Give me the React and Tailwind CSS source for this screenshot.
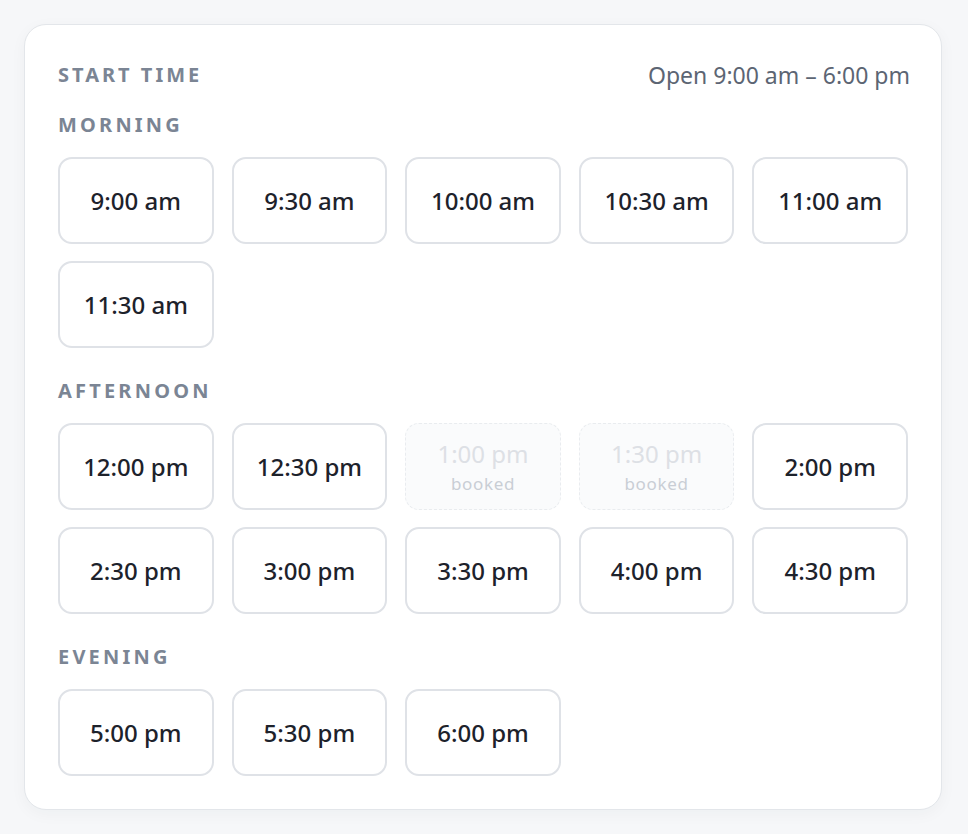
import React from "react";

const sections = [
  {
    name: "Morning",
    slots: [
      { t: "9:00 am" },
      { t: "9:30 am" },
      { t: "10:00 am" },
      { t: "10:30 am" },
      { t: "11:00 am" },
      { t: "11:30 am" },
    ],
  },
  {
    name: "Afternoon",
    slots: [
      { t: "12:00 pm" },
      { t: "12:30 pm" },
      { t: "1:00 pm", booked: true },
      { t: "1:30 pm", booked: true },
      { t: "2:00 pm" },
      { t: "2:30 pm" },
      { t: "3:00 pm" },
      { t: "3:30 pm" },
      { t: "4:00 pm" },
      { t: "4:30 pm" },
    ],
  },
  {
    name: "Evening",
    slots: [{ t: "5:00 pm" }, { t: "5:30 pm" }, { t: "6:00 pm" }],
  },
];

function Slot({ slot }) {
  if (slot.booked) {
    return (
      <div className="h-[87px] rounded-[14px] border border-dashed border-[#e9ecef] bg-[#fafbfc] flex flex-col items-center justify-center">
        <span className="text-[24px] leading-[30px] text-[#dde0e5]">{slot.t}</span>
        <span className="mt-[4px] text-[17px] leading-[22px] text-[#c9ced5] tracking-[0.04em]">booked</span>
      </div>
    );
  }
  return (
    <button className="h-[87px] rounded-[14px] border-2 border-[#dfe2e7] bg-white flex items-center justify-center text-[24px] font-medium text-[#1d222b]">
      {slot.t}
    </button>
  );
}

export default function App() {
  return (
    <div
      className="min-h-screen bg-[#f6f7f9] p-6"
      style={{ fontFamily: '"Noto Sans", "Open Sans", sans-serif' }}
    >
      <div className="w-[918px] rounded-[22px] border border-[#e3e6ea] bg-white px-[33px] pt-[36px] pb-[33px] shadow-[0_4px_16px_rgba(30,40,60,0.04)]">
        <div className="flex items-center justify-between h-[28px]">
          <span className="text-[20px] font-bold uppercase tracking-[0.15em] text-[#7b8594]">
            Start time
          </span>
          <span className="text-[23px] text-[#5c6573] -mr-[2px]">Open 9:00 am – 6:00 pm</span>
        </div>
        <div className="mt-[22px] flex flex-col gap-[29px]">
          {sections.map((s) => (
            <div key={s.name}>
              <div className="h-[28px] flex items-center mb-[18px] text-[20px] font-bold uppercase tracking-[0.16em] text-[#7b8594]">
                {s.name}
              </div>
              <div className="grid grid-cols-5 gap-x-[18px] gap-y-[17px]">
                {s.slots.map((slot) => (
                  <Slot key={slot.t} slot={slot} />
                ))}
              </div>
            </div>
          ))}
        </div>
      </div>
    </div>
  );
}
